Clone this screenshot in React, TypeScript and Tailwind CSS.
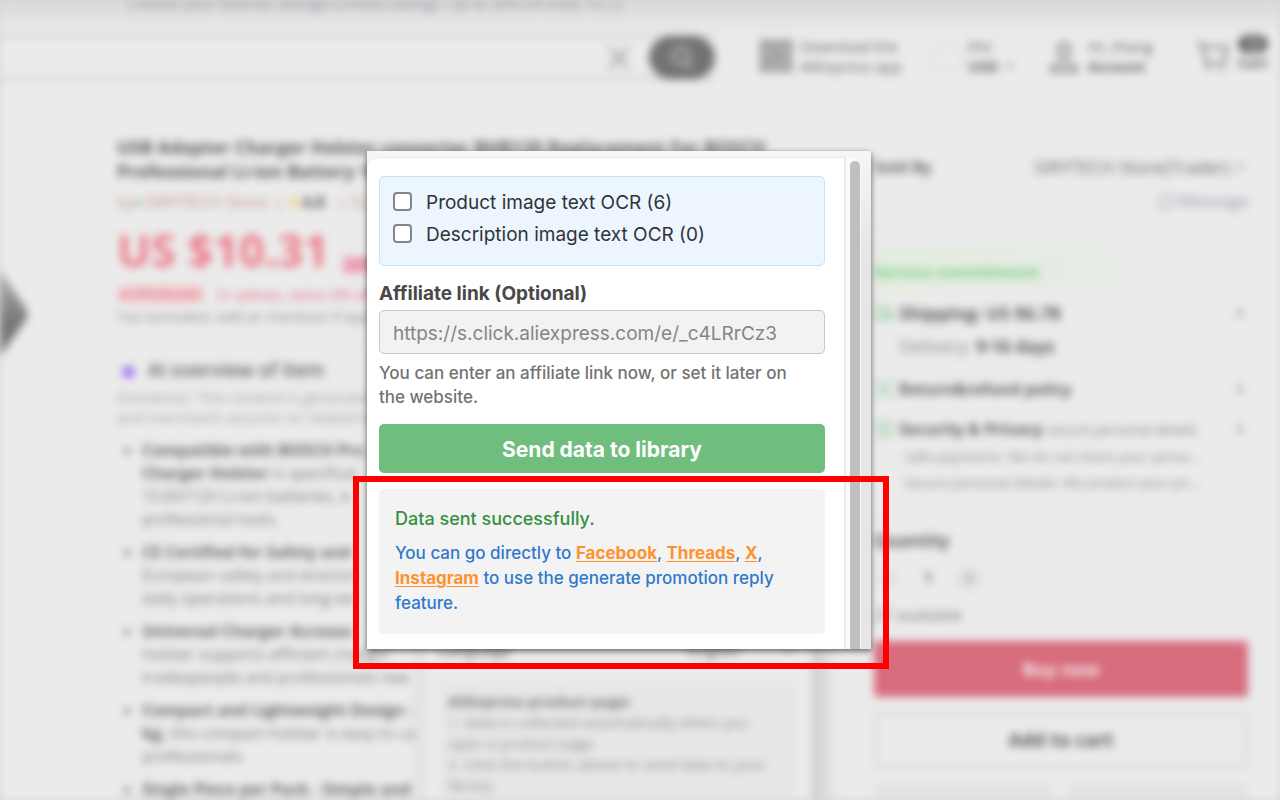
import type { ReactNode } from "react";
import { ChevronDown, ChevronRight, MessageCircle, Minus, Plus, ScanSearch, ShieldCheck, Truck } from "lucide-react";

const highlights: { strong?: string; text?: string }[][] = [
  [
    { strong: "Compatible with BOSCH Pro" },
    { strong: "Charger Holster", text: " is specifical" },
    { text: "10.8V/12V Li-ion batteries, e" },
    { text: "professional tools." },
  ],
  [
    { strong: "CE Certified for Safety and" },
    { text: "European safety and environ" },
    { text: "daily operations and long-ter" },
  ],
  [
    { strong: "Universal Charger Accesso" },
    { text: "holster supports efficient chargin" },
    { text: "tradespeople and professionals nee" },
  ],
  [
    { strong: "Compact and Lightweight Design -" },
    { strong: "kg,", text: " this compact holster is easy to ca" },
    { text: "professionals." },
  ],
  [{ strong: "Single Piece per Pack - Simple and" }],
];

function QrIcon() {
  return (
    <svg width="34" height="34" viewBox="0 0 34 34" fill="none" stroke="#8c8c8c" strokeWidth="4" className="mb-[3px] shrink-0" aria-hidden="true">
      <path d="M3 3h11v11H3zM20 3h11v11H20zM3 20h11v11H3zM20 20h11v11H20z" />
      <path d="M7 8h4M24 8h4M7 25h4M24 26h3M15 16h5" />
    </svg>
  );
}

function PersonIcon() {
  return (
    <svg width="32" height="36" viewBox="0 0 32 36" fill="none" stroke="#979797" strokeWidth="4" className="shrink-0" aria-hidden="true">
      <circle cx="16" cy="10" r="6" />
      <path d="M4 31c0-6 4-8 12-8s12 2 12 8z" />
    </svg>
  );
}

function CartIcon() {
  return (
    <svg width="34" height="34" viewBox="0 0 34 34" fill="none" stroke="#8f8f8f" strokeWidth="3" className="mb-[4px] shrink-0" aria-hidden="true">
      <path d="M1 4h5l4 20h18l3-16H8" />
      <path d="M12 28v4M26 28v4" strokeWidth="4" />
    </svg>
  );
}

function TopBar() {
  return (
    <header>
      <div className="h-[34px] bg-linear-to-b from-[#d8d8d8] to-[#ebebeb] pl-[127px] text-[15px] leading-[6px] text-[#8c8c9c]">
        Choose your favorite savings/Limited savings. Up to 30% off ends 10.12
      </div>
      <div className="flex h-[47px] items-center">
        <div className="flex h-full w-[715px] items-center border-y-4 border-[#d8d8d8]">
          <input aria-label="Search products" className="min-w-0 flex-1 bg-transparent" />
          <button aria-label="Clear" className="mr-[16px] text-[#a0a0a0]">
            <svg width="28" height="28" viewBox="0 0 28 28" fill="none" stroke="currentColor" strokeWidth="3">
              <path d="M4 3l20 22M24 3L4 25" />
            </svg>
          </button>
          <button aria-label="Search" className="flex h-[43px] w-[66px] items-center justify-center rounded-full bg-[#737373] text-[#aaa]">
            <svg width="28" height="28" viewBox="0 0 28 28" fill="none" stroke="currentColor" strokeWidth="4">
              <circle cx="13" cy="12" r="8" />
              <path d="M18 18l6 6" />
            </svg>
          </button>
        </div>
        <div className="flex flex-1 items-center pr-[10px] pl-[44px] text-[15px] leading-[20px] text-[#606060]">
          <QrIcon />
          <div className="mb-[3px] ml-[7px] w-[132px]">
            Download the
            <br />
            AliExpress app
          </div>
          <div className="h-[24px] w-[30px] border-2 border-[#dcdcdc]" />
          <div className="mb-[3px] ml-[6px] w-[80px]">
            EN/
            <br />
            <b className="flex items-center gap-1">
              USD <ChevronDown size={14} />
            </b>
          </div>
          <PersonIcon />
          <div className="mb-[3px] ml-[8px] w-[108px]">
            Hi, zhang
            <br />
            <b className="text-[14px]">Account</b>
          </div>
          <CartIcon />
          <div className="mb-[8px] ml-[8px] text-[14px]">
            <span className="flex h-[18px] w-[30px] items-center justify-center rounded-full bg-[#626262] font-bold text-[#d8d8d8]">12</span>
            <b>Cart</b>
          </div>
        </div>
      </div>
    </header>
  );
}

function ProductInfo() {
  return (
    <section className="w-[668px] shrink-0">
      <h1 className="text-[18px] leading-[24px] font-bold text-[#5c5c5c]">
        USB Adapter Charger Holster converter BHB120 Replacement For BOSCH
        <br />
        Professional Li-ion Battery 10.8
      </h1>
      <div className="mt-[9px] flex h-[20px] items-center text-[17px] whitespace-nowrap text-[#c09488]">
        by
        <span className="text-[12px] text-[#83ad8c]">●</span>
        <span className="pl-[2px]">SIRYTECH Store</span>
        <span className="pl-[6px]">|</span>
        <span className="pl-1 text-[#f1c869]">★</span>
        <b className="text-[16px] text-[#5c5c5c]">4.8</b>
        <span className="pl-3">| 52</span>
      </div>
      <div className="mt-[10px] flex h-[56px] items-end">
        <b className="text-[45px] leading-[56px] text-[#ec7a88]">US $10.31</b>
        <span className="mb-[4px] ml-[14px] bg-[#ebc4ce] text-[16px] leading-[18px] font-bold text-[#ea7296]">20%</span>
      </div>
      <div className="mt-[6px] flex h-[20px] items-center gap-[12px] text-[15px] text-[#e0607e]">
        <span className="rounded bg-[#f1cfcf] px-1 text-[14px] leading-[18px]">
          <b>●</b> Wholesale
        </span>
        2+ pieces, extra 5% off
      </div>
      <p className="text-[15px] leading-[24px] text-[#8c8c8c]">Tax excluded, add at checkout if app</p>
      <div className="mt-[13px] border-t border-[#ddd]" />
      <h2 className="mt-[16px] flex h-[24px] items-center gap-[12px] pl-[4px] text-[19px] font-semibold text-[#606060]">
        <span className="text-[#9b74f6]">◆</span>AI overview of item
      </h2>
      <p className="mt-[5px] text-[15px] leading-[20px] text-[#a0a0b0]">
        Disclaimer: This content is generated
        <br />
        and merchants assume no related leg
      </p>
      <ul className="mt-[12px] list-disc space-y-[10px] pl-[25px] text-[16px] leading-[23px] text-[#7c7c7c]">
        {highlights.map((lines, index) => (
          <li key={index}>
            {lines.map((line, lineIndex) => (
              <span key={lineIndex}>
                {lineIndex > 0 && <br />}
                {line.strong && <b className="text-[#666]">{line.strong}</b>}
                {line.text}
              </span>
            ))}
          </li>
        ))}
      </ul>
    </section>
  );
}

function ServiceRow({ icon, children }: { icon: ReactNode; children: ReactNode }) {
  return (
    <div className="flex h-[40px] items-center gap-[5px] text-[16px] whitespace-nowrap text-[#5c5c5c]">
      <span className="text-[#a2d4aa]">{icon}</span>
      <div className="flex-1">{children}</div>
      <ChevronRight size={16} />
    </div>
  );
}

function PurchasePanel() {
  return (
    <aside className="min-w-0 flex-1 pt-[20px]">
      <div className="flex h-[24px] items-center justify-between text-[18px] text-[#686868]">
        <b className="text-[16px]">Sold By</b>
        <span className="flex items-center gap-1">
          SIRYTECH Store(Trader) <ChevronRight size={14} />
        </span>
      </div>
      <div className="mt-[10px] flex h-[24px] items-center justify-end gap-1 text-[17px] text-[#9494a8]">
        <MessageCircle size={16} /> Message
      </div>
      <div className="mt-[16px] border-t border-[#dedede]" />
      <h2 className="mt-[16px] h-[46px] bg-linear-to-r from-[#e2eddf] to-[#ebebeb] pt-[14px] text-[16px] leading-[24px] font-bold text-[#7acc83]">
        Service commitment
      </h2>
      <div className="mt-[1px]">
        <ServiceRow icon={<Truck size={20} strokeWidth={3} />}>
          <b className="text-[18px]">Shipping: US $6.78</b>
        </ServiceRow>
      </div>
      <p className="h-[36px] pl-[25px] text-[18px] leading-[26px] text-[#888]">
        Delivery: <b className="text-[17px] text-[#5c5c5c]">9-16 days</b>
      </p>
      <ServiceRow icon={<ScanSearch size={20} strokeWidth={3} />}>
        <b>Return&amp;refund policy</b>
      </ServiceRow>
      <ServiceRow icon={<ShieldCheck size={20} strokeWidth={3} />}>
        <b>Security &amp; Privacy</b> <span className="text-[14px] text-[#848484]">secure personal details</span>
      </ServiceRow>
      <div className="-mt-[5px] pl-[30px] text-[14px] leading-[26px] text-[#8c8c8c]">
        <p>Safe payments: We do not share your perso...</p>
        <p>Secure personal details: We protect your pri...</p>
      </div>
      <div className="mt-[17px] border-t border-[#dedede]" />
      <b className="mt-[15px] block text-[17px] leading-[24px] text-[#606060]">Quantity</b>
      <div className="mt-[12px] flex h-[26px] w-[108px] items-center justify-between text-[#777]">
        <button aria-label="Decrease" className="rounded-full bg-[#e7e7e7] p-1 text-[#bbb]">
          <Minus size={18} />
        </button>
        <b>1</b>
        <button aria-label="Increase" className="rounded-full bg-[#e2e2e2] p-1 text-[#999]">
          <Plus size={18} />
        </button>
      </div>
      <p className="mt-[12px] text-[16px] leading-[24px] text-[#7c7c7c]">27 available</p>
      <button className="mt-[14px] block h-[56px] w-full rounded bg-[#d76c7d] text-[18px] font-bold text-[#f7ecee]">Buy now</button>
      <button className="mt-[14px] block h-[58px] w-full rounded border-4 border-[#dcdcdc] text-[19px] font-bold text-[#5c5c5c]">Add to cart</button>
      <div className="mt-[14px] grid grid-cols-2 gap-[16px]">
        <button aria-label="Share" className="h-[44px] bg-[#e3e3e3]" />
        <button aria-label="Favorite" className="h-[44px] bg-[#e3e3e3]" />
      </div>
    </aside>
  );
}

function LowerPopup() {
  return (
    <div className="absolute top-[600px] left-[424px] h-[220px] w-[388px] bg-[#ebebeb] px-[15px] pt-[38px] text-[15px] text-[#8c8c8c] shadow-[6px_0_20px_2px_#c0c0c0]">
      <div className="flex h-[24px] items-center text-[16px] text-[#6c6c6c]">
        <span className="flex-1">Language</span>
        <span className="mr-[40px]">English</span>
        <ChevronDown size={16} />
      </div>
      <div className="mt-[20px] h-[160px] bg-[#e7e7e7] px-[9px] pt-[9px] leading-[21px] whitespace-nowrap">
        <b className="block text-[#747474]">AliExpress product page:</b>
        <p>
          1. Data is collected automatically when you
          <br />
          open a product page
        </p>
        <p>
          2. Click the button above to send data to your
          <br />
          library
        </p>
      </div>
    </div>
  );
}

function Option({ children }: { children: ReactNode }) {
  return (
    <label className="flex h-[32px] items-center gap-[14px] text-[19px] text-[#303438]">
      <input type="checkbox" className="mb-[3px] size-[19px] appearance-none rounded-[4px] border-2 border-[#858585] bg-white" />
      {children}
    </label>
  );
}

function SocialLink({ children }: { children: ReactNode }) {
  return (
    <a href="#" className="font-bold text-[#ff922e] underline decoration-1 underline-offset-2">
      {children}
    </a>
  );
}

function ExtensionDialog() {
  return (
    <main className="absolute top-[151px] left-[367px] flex h-[498px] w-[504px] overflow-hidden bg-linear-to-b from-[#f6f6f6] to-[#e6e6e6] to-20% pt-[6px] font-['Inter','Liberation_Sans',sans-serif] shadow-[0_2px_6px_rgba(0,0,0,0.6)]">
      <div className="w-[479px] shrink-0 rounded-tl-[12px] border-t border-r-2 border-[#ebebeb] bg-white pt-[18px] pr-[19px] pl-[12px]">
        <div className="h-[90px] rounded-[5px] border border-[#c6e2fb] bg-[#edf6fe] px-[13px] pt-[10px]">
          <Option>Product image text OCR (6)</Option>
          <Option>Description image text OCR (0)</Option>
        </div>
        <label htmlFor="affiliate" className="mt-[14px] block text-[19px] leading-[28px] font-bold text-[#484848]">
          Affiliate link (Optional)
        </label>
        <input
          id="affiliate"
          placeholder="https://s.click.aliexpress.com/e/_c4LRrCz3"
          className="mt-[2px] block h-[44px] w-full rounded-[5px] border border-[#c8c8c8] bg-[#f2f2f2] px-[13px] pt-[3px] text-[19px] placeholder:text-[#858585]"
        />
        <p className="mt-[7px] pr-[20px] text-[17px] leading-[24px] font-medium text-[#737373]">
          You can enter an affiliate link now, or set it later on the website.
        </p>
        <button className="mt-[15px] block h-[49px] w-full rounded-[5px] bg-[#6fbe7d] pt-[2px] text-[21px] font-bold text-white">Send data to library</button>
        <div className="mt-[16px] h-[145px] rounded-[5px] bg-[#f3f3f3] px-[16px] pt-[17px]">
          <p className="text-[18px] leading-[26px] font-medium text-[#35903f]">Data sent successfully.</p>
          <p className="mt-[9px] text-[17px] leading-[25px] font-medium text-[#2f79cc]">
            You can go directly to <SocialLink>Facebook</SocialLink>, <SocialLink>Threads</SocialLink>, <SocialLink>X</SocialLink>,
            <br />
            <SocialLink>Instagram</SocialLink> to use the generate promotion reply feature.
          </p>
        </div>
      </div>
      <div className="w-[15px] shrink-0 rounded-tr-[12px] bg-[#fafafa] pt-[4px] pl-[4px]">
        <div className="h-full w-[10px] rounded-t-full bg-[#bfbfbf]" />
      </div>
    </main>
  );
}

export default function App() {
  return (
    <div className="relative h-screen overflow-hidden bg-[#d8d8d8] font-['Open_Sans','Liberation_Sans',sans-serif]">
      <div className="relative h-full overflow-hidden bg-[#ebebeb] blur-[4px]">
        <TopBar />
        <div className="flex gap-[89px] pt-[54px] pr-[32px] pl-[117px]">
          <ProductInfo />
          <PurchasePanel />
        </div>
        <svg aria-hidden="true" className="absolute top-[264px] left-0 h-[100px] w-[32px]" viewBox="0 0 32 100">
          <defs>
            <linearGradient id="arrow" x1="0" y1="0" x2="0" y2="1">
              <stop offset="0" stopColor="#bbb" />
              <stop offset="0.6" stopColor="#777" />
            </linearGradient>
          </defs>
          <path d="M-4 0L27 46V54L-4 98Z" fill="url(#arrow)" />
        </svg>
        <LowerPopup />
      </div>
      <ExtensionDialog />
      <div className="pointer-events-none absolute top-[476px] left-[353px] h-[193px] w-[536px] border-[6px] border-[#ff0000]" />
    </div>
  );
}
